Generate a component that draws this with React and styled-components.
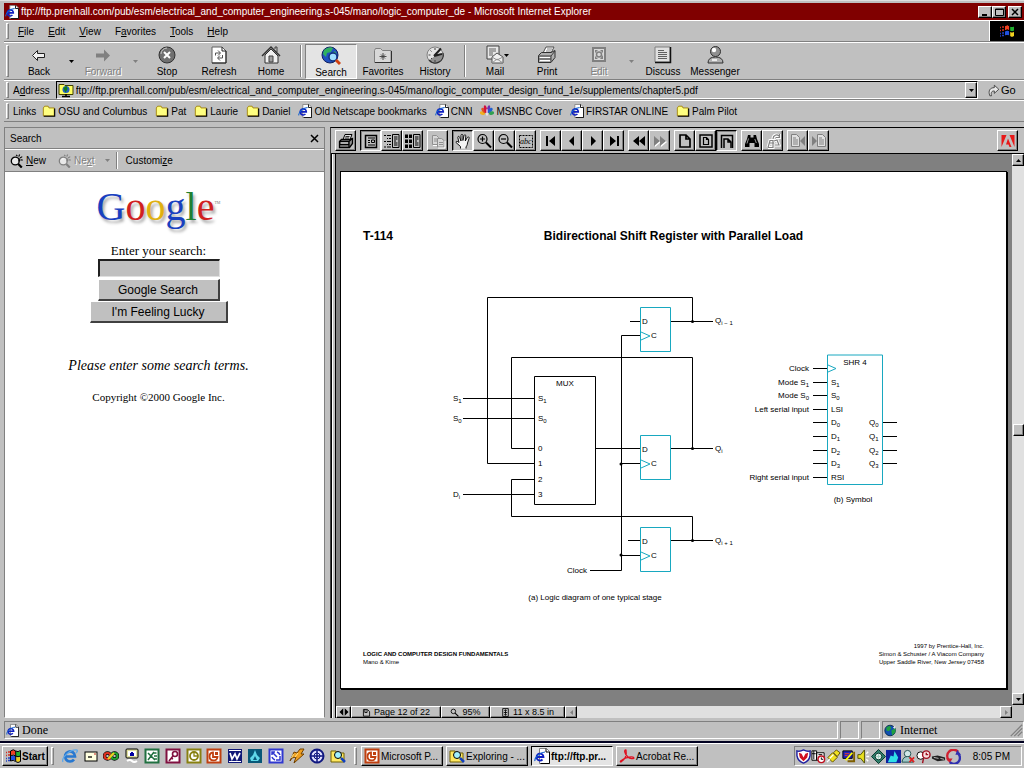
import React from 'react';
import styled, { createGlobalStyle, css } from 'styled-components';

const GlobalStyle = createGlobalStyle`
    * { box-sizing: border-box; }
    body {
        margin: 0;
        background: #c0c0c0;
        color: #000;
        font: 10px/13px "Liberation Sans", Arial, sans-serif;
    }
    button, input {
        font: inherit;
        color: inherit;
        margin: 0;
        padding: 0;
        border: 0;
        border-radius: 0;
        background: none;
    }
    a { color: inherit; text-decoration: none; }
    u { text-decoration: underline; }
    svg { display: block; flex: none; }
`;

const raised = css`
    border: 1px solid;
    border-color: #fff #000 #000 #fff;
    box-shadow: inset -1px -1px 0 #808080;
`;

const sunken = css`
    border: 1px solid;
    border-color: #808080 #fff #fff #808080;
`;

const Desktop = styled.div`
    min-height: 100vh;
    display: flex;
    flex-direction: column;
`;

const Browser = styled.div`
    flex: 1;
    display: flex;
    flex-direction: column;
    border-top: 1px solid #dfdfdf;
    border-bottom: 2px solid #000020;
    padding: 2px 0 1px 4px;
`;

const TitleBar = styled.header`
    height: 17px;
    display: flex;
    align-items: center;
    background: #800000;
    color: #fff;
    padding: 0 2px 0 1px;
    gap: 2px;
    white-space: nowrap;

    > h1 {
        flex: 1;
        margin: 0;
        font: inherit;
    }
`;

const WindowButton = styled.button`
    ${raised}
    width: 14px;
    height: 12px;
    background: #c0c0c0;
    margin-left: ${p => (p.$apart ? '0' : '-2px')};
    display: grid;
    place-items: center;
`;

const Band = styled.div`
    display: flex;
    align-items: center;
    height: ${p => p.$h}px;
    border-top: 1px solid #fff;
    border-bottom: 1px solid #808080;
    padding-left: 2px;
    white-space: nowrap;
`;

const Grip = styled.i`
    width: 3px;
    height: ${p => p.$h || 16}px;
    border: 1px solid;
    border-color: #fff #808080 #808080 #fff;
    margin-right: ${p => p.$gap || 2}px;
    flex: none;
`;

const Rule = styled.i`
    width: 2px;
    height: ${p => p.$h || 32}px;
    border-left: 1px solid #808080;
    border-right: 1px solid #fff;
    margin: 0 3px;
    flex: none;
`;

const MenuButton = styled.button`
    padding: 0 7px;
`;

const Throbber = styled.div`
    width: 35px;
    height: 20px;
    margin-left: auto;
    background: #000;
    border-left: 1px solid #fff;
    display: grid;
    place-items: center;
`;

const ToolButton = styled.button`
    position: relative;
    width: 52px;
    height: 35px;
    display: flex;
    flex-direction: column;
    align-items: center;
    padding-top: 1px;
    color: ${p => (p.$off ? '#808080' : '#000')};
    text-shadow: ${p => (p.$off ? '1px 1px 0 #fff' : 'none')};
    ${p => p.$pressed && css`
        ${sunken}
        background: #e4e4e4;
    `}
`;

const DropButton = styled.button`
    width: 12px;
    height: 35px;
    display: grid;
    place-items: center;
    color: ${p => (p.$off ? '#808080' : '#000')};
`;

const InnerDrop = styled.span`
    position: absolute;
    right: 12px;
    top: 9px;
`;

const AddressBox = styled.div`
    flex: 1;
    display: flex;
    align-items: center;
    height: 18px;
    border: 1px solid;
    border-color: #000 #fff #fff #000;
    padding-left: 1px;

    > input {
        flex: 1;
        min-width: 0;
        margin-left: 2px;
    }
`;

const ComboButton = styled.button`
    ${raised}
    width: 12px;
    height: 16px;
    background: #c0c0c0;
    display: grid;
    place-items: center;
`;

const GoButton = styled.button`
    display: flex;
    align-items: center;
    gap: 1px;
    width: 46px;
    padding-left: 9px;
    font-size: 11px;
`;

const BandLabel = styled.label`
    padding: 0 6px 0 2px;
`;

const LinkItem = styled.a`
    display: flex;
    align-items: center;
    gap: 2px;
    margin-right: 8px;
`;

const Main = styled.main`
    flex: 1;
    display: flex;
    margin-top: 5px;
    gap: 5px;
`;

const SearchPane = styled.aside`
    width: 321px;
    display: flex;
    flex-direction: column;
    border: 1px solid;
    border-color: #808080 #808080 #fff #808080;
`;

const PaneHead = styled.div`
    height: 21px;
    display: flex;
    align-items: center;
    justify-content: space-between;
    padding: 0 5px;
    border-bottom: 1px solid #808080;

    > h2 { margin: 0; font: inherit; }
`;

const PaneTools = styled.div`
    height: 23px;
    display: flex;
    align-items: center;
    border-top: 1px solid #fff;
    border-bottom: 1px solid #808080;
    padding-left: 5px;
`;

const PaneButton = styled.button`
    display: flex;
    align-items: center;
    gap: 2px;
    padding: 0 ${p => p.$after || 0}px 0 ${p => p.$before || 0}px;
    color: ${p => (p.$off ? '#808080' : '#000')};
    text-shadow: ${p => (p.$off ? '1px 1px 0 #fff' : 'none')};
`;

const PaneBody = styled.div`
    flex: 1;
    display: flex;
    flex-direction: column;
    align-items: center;
    background: #fff;
    padding: 11px 12px 0 0;
    font: 13px/16px "Liberation Serif", "Times New Roman", serif;

    > form {
        display: flex;
        flex-direction: column;
        align-items: center;
    }
    > em { font-size: 14px; margin-top: 35px; }
    > p { font-size: 11px; margin: 15px 0 0; }
`;

const Logo = styled.div`
    font-size: 40px;
    line-height: 48px;
    margin-bottom: 12px;
    text-shadow: 2px 3px 3px #aaa;
    display: flex;

    > small { font-size: 4px; line-height: 40px; color: #777; text-shadow: none; }
`;

const Letter = styled.span`
    color: ${p => p.$c};
`;

const SearchInput = styled.input`
    width: 122px;
    height: 18px;
    margin: 0 0 2px;
    background: #c0c0c0;
    border: 1px solid;
    border-width: 2px 1px 1px 2px;
    border-color: #202020 #dfdfdf #dfdfdf #202020;
`;

const SearchButton = styled.button`
    width: ${p => p.$w}px;
    height: 22px;
    background: #c0c0c0;
    border: 1px solid;
    border-width: 1px 2px 2px 1px;
    border-color: #fff #404040 #404040 #fff;
    font: 12px/16px "Liberation Sans", Arial, sans-serif;
`;

const Viewer = styled.section`
    flex: 1;
    min-width: 0;
    display: flex;
    flex-direction: column;
    border-left: 1px solid #404040;
    border-top: 1px solid #000;
`;

const ViewerTools = styled.div`
    height: 26px;
    display: flex;
    align-items: center;
    gap: 4px;
    padding: 0 6px 0 4px;
    border-bottom: 1px solid #000;

    > :last-child { margin-left: auto; }
`;

const ToolGroup = styled.div`
    display: flex;
`;

const ViewerButton = styled.button`
    width: 21px;
    height: 21px;
    display: grid;
    place-items: center;
    color: ${p => (p.$off ? '#808080' : '#000')};
    ${raised}
    ${p => p.$pressed && css`
        border-color: #000 #fff #fff #000;
        box-shadow: inset 1px 1px 0 #808080;
    `}
`;

const ViewerBody = styled.div`
    flex: 1;
    display: flex;
`;

const Splitter = styled.div`
    width: 5px;
    background: #c0c0c0;
    border: 1px solid #000;
    border-width: 0 1px;
    box-shadow: inset 1px 0 0 #fff;
`;

const DocumentColumn = styled.div`
    flex: 1;
    min-width: 0;
    display: flex;
    flex-direction: column;
`;

const Canvas = styled.div`
    flex: 1;
    display: flex;
    background: #808080;
    padding: 17px 5px 17px 4px;
`;

const Paper = styled.article`
    flex: 1;
    display: flex;
    flex-direction: column;
    background: #fff;
    border: 1px solid #000;
    box-shadow: 1px 1px 0 #000;
    padding: 57px 22px 22px;
`;

const PaperHead = styled.div`
    display: grid;
    grid-template-columns: 1fr auto 1fr;
    font-size: 12px;
    line-height: 14px;
    font-weight: bold;

    > h2 { margin: 0; font: inherit; }
`;

const Figures = styled.div`
    display: flex;
    align-items: flex-start;
    gap: 7px;
    padding: 46px 0 0 87px;
`;

const Figure = styled.figure`
    margin: ${p => p.$drop || 0}px 0 0;
    font-size: 8px;
    line-height: 10px;
    text-align: center;

    > figcaption { padding-top: ${p => p.$gap}px; }
`;

const PaperFoot = styled.footer`
    margin-top: auto;
    display: flex;
    justify-content: space-between;
    align-items: flex-end;
    font-size: 6px;
    line-height: 8px;

    > p { margin: 0; }
    > p:last-child { text-align: right; }
`;

const VScroll = styled.div`
    width: 12px;
    display: flex;
    flex-direction: column;
    align-items: center;
    background: #e0e0e0;
    margin-bottom: 13px;
`;

const ScrollButton = styled.button`
    ${raised}
    width: 12px;
    height: 12px;
    background: #c0c0c0;
    display: grid;
    place-items: center;
    flex: none;
    color: ${p => (p.$off ? '#808080' : '#000')};
`;

const Thumb = styled.div`
    ${raised}
    width: 11px;
    height: 12px;
    background: #c0c0c0;
`;

const Spacer = styled.i`
    flex: 1;
`;

const DocStatus = styled.div`
    height: 12px;
    display: flex;
    align-items: stretch;
    background: #e0e0e0;
    font-size: 9px;
`;

const DocCell = styled.button`
    ${raised}
    width: ${p => p.$w}px;
    display: flex;
    align-items: center;
    justify-content: center;
    gap: 3px;
    background: #c0c0c0;
    line-height: 10px;
`;

const StatusBar = styled.div`
    display: flex;
    gap: 2px;
    height: 20px;
    margin-top: 2px;
    padding: 1px 0;
    font: 12px/16px "Liberation Serif", "Times New Roman", serif;
`;

const StatusCell = styled.div`
    ${sunken}
    display: flex;
    align-items: center;
    gap: 3px;
    padding-left: 1px;
    ${p => (p.$w ? `width: ${p.$w}px;` : 'flex: 1;')}

    > svg:last-child:not(:first-child) { margin-left: auto; }
`;

const TaskBar = styled.nav`
    height: 25px;
    display: flex;
    align-items: center;
    border-top: 1px solid #fff;
    padding: 0 2px;
`;

const StartButton = styled.button`
    ${raised}
    width: 46px;
    height: 20px;
    display: flex;
    align-items: center;
    gap: 1px;
    padding-left: 2px;
    font-weight: bold;
    margin-right: 3px;
`;

const QuickLaunch = styled.div`
    width: 284px;
    display: flex;
    justify-content: space-between;
    margin: 0 8px 0 6px;
`;

const TaskButton = styled.button`
    ${raised}
    width: 82px;
    height: 20px;
    margin-right: 3px;
    padding-left: 2px;
    display: flex;
    align-items: center;
    gap: 1px;
    white-space: nowrap;
    ${p => p.$pressed && css`
        border-color: #000 #fff #fff #000;
        box-shadow: none;
        background: #e4e4e4;
        font-weight: bold;
    `}
`;

const Tray = styled.div`
    ${sunken}
    width: 228px;
    height: 20px;
    margin-left: auto;
    display: flex;
    align-items: center;
    padding-left: 1px;

    > time { margin: 0 11px 0 auto; }
`;

const folder = (
    <>
        <path d="M1.500 4.500l1.500-2h4l1 2h6v9h-12.500z" fill="#ffff80" stroke="#a08000" />
        <path d="M2 14h12.500V5" fill="none" stroke="#000" strokeWidth="1.300" />
    </>
);

const pageE = (
    <>
        <path d="M5.500.500h7l3 3v12h-10z" fill="#fff" stroke="#808080" />
        <path d="M12 .500v3.500h3.500v11.500h-9" fill="none" stroke="#000" />
        <path d="M3 9h6.500A3.500 3.500 0 1 0 8.500 11.500" fill="none" stroke="#1020c0" strokeWidth="1.800" />
        <path d="M1 13C0 10 6 4 11 4" fill="none" stroke="#1060d0" strokeWidth="1.200" />
    </>
);

const lens = (
    <>
        <circle cx="6" cy="8" r="4.500" fill="#e8e8e8" stroke="currentColor" strokeWidth="1.500" />
        <path d="M4 6.500q1-1 2.500-1" fill="none" stroke="#fff" />
        <path d="M9.500 11.500l4 4" stroke="currentColor" strokeWidth="2.500" />
        <path d="M7 1l1.500 1.500M11 .500L10 3M14 3l-2.500 1.500M14.500 7L12 6.500M10 4.500l1 3-1.500.500" fill="none" stroke="currentColor" strokeWidth="1.300" />
    </>
);

const findFolder = (
    <>
        <path d="M1 3h5l1 2h7v9H1z" fill="#ffe860" stroke="#706000" />
        <circle cx="8" cy="7" r="3.500" fill="#a0f0ff" stroke="#000" />
        <path d="M11 10l4 4" stroke="#1040c0" strokeWidth="2.500" />
    </>
);

const printerShape = (
    <>
        <path d="M5 6.500l2-5h7l-2 5" fill="#e0e0e0" stroke="currentColor" />
        <path d="M7.500 3.500h4M7 5h4" stroke="currentColor" strokeWidth=".8" />
        <path d="M1.500 8.500l2-2h9l2-1v5l-3 4h-10z" fill="#909090" stroke="currentColor" strokeWidth="1.300" />
        <path d="M2 8.500h9l3-3M2 11.500h9M11 8.500v5.500" fill="none" stroke="currentColor" strokeWidth="1.300" />
        <path d="M3 10h7" stroke="#f0f0f0" />
    </>
);

const binoculars = (
    <>
        <path d="M4 2h2.500v2.500h3V2H12l1 4 2 5v3h-4.500v-4h-5v4H1v-3l2-5z" fill="currentColor" />
        <path d="M4.500 5.500l-1.500 5M10.800 6l1.500 4" stroke="#c0c0c0" strokeWidth=".8" />
    </>
);

const appTile = (color, mark) => (
    <>
        <rect x="1.500" y="1.500" width="13" height="13" fill="#fff" stroke={color} strokeWidth="2" />
        {mark}
    </>
);

const flag = (
    <>
        <path d="M6 3q2.500-2 4.500 0v4.500q-2-2-4.500 0z" fill="#f04020" />
        <path d="M11 3.500q2.500 1 4.500-.500V8q-2 1-4.500 0z" fill="#20b030" />
        <path d="M6 8.500q2.500-2 4.500 0V13q-2-2-4.500 0z" fill="#2050e0" />
        <path d="M11 9q2.500 1 4.500-.500V13q-2 1.500-4.500.500z" fill="#f0d020" />
        <path d="M1 4.500h1M3 4h2M1 7.500h1M3 7h2" stroke="#d03020" strokeWidth="1.500" />
        <path d="M1 10.500h1M3 10h2M1 13h1M3 12.500h2" stroke="#2040c0" strokeWidth="1.500" />
        <path d="M5.500 13V3q3-2.500 5.200 0 2.300 1.500 4.800-.500v11q-2.500 2-5 0-2-2-5-.500M5.500 8q3-2 5 0 2.500 1.500 5 0M10.700 3v10" fill="none" stroke="#000" />
    </>
);

const pageLines = 'M8.500 1.500h6.500v13h-6.500zM10 4h3.500M10 6h3.500M10 8h2M10 10h3.500M10 12h3.500';

const shapes = {
    folder,
    page: pageE,
    flag,
    findFolder,
    lens,
    printer: printerShape,
    binoculars,
    // address bar and links
    network: (
        <>
            <path d="M1 2.500h5l1 1h8v9H1z" fill="#ffff60" stroke="#404000" />
            <circle cx="8" cy="7.500" r="3.500" fill="#2060c0" />
            <path d="M5.500 6l3-2 1 3-2 3.500z" fill="#108010" />
            <path d="M8 12v2.500M4 14.500h8" stroke="#000" strokeWidth="1.500" />
        </>
    ),
    peacock: (
        <>
            <ellipse cx="3" cy="10.500" rx="3" ry="2" fill="#f0b020" transform="rotate(20 3 10)" />
            <ellipse cx="4" cy="7.500" rx="2" ry="3.500" fill="#e05020" transform="rotate(-40 4 7)" />
            <ellipse cx="6.300" cy="6" rx="1.700" ry="4.500" fill="#d01040" transform="rotate(-12 6 6)" />
            <ellipse cx="9.700" cy="6" rx="1.700" ry="4.500" fill="#7030b0" transform="rotate(12 10 6)" />
            <ellipse cx="12" cy="7.500" rx="2" ry="3.500" fill="#2060d0" transform="rotate(40 12 7)" />
            <ellipse cx="13" cy="10.500" rx="3" ry="2" fill="#30a050" transform="rotate(-20 13 10)" />
            <path d="M8 13V6" stroke="#fff" strokeWidth="1.300" />
        </>
    ),
    go: <path d="M3.500 14.500C1 8 4 4.500 9 4.500V1.500l5.500 5-5.500 5V8.500C6 8.500 4.500 10 5.500 14.500z" fill="#e8e8e8" stroke="#303030" />,
    // document toolbar
    viewPage: (
        <>
            <rect x="2.500" y="2.500" width="11" height="12" fill="#c0c0c0" stroke="#000" strokeWidth="1.500" />
            <path d="M5 5h7M5 7.500h2M5 9.500h2M5 12h7M8.500 7h3v2.500h-3z" fill="none" stroke="#000" />
        </>
    ),
    viewOutline: (
        <>
            <path d="M0 2.500h2M3 2.500h4M3 5.500h1M5 5.500h2M0 8.500h2M3 8.500h4M3 11.500h1M5 11.500h2M0 14h2M3 14h4" stroke="#000" />
            <path d={pageLines} fill="none" stroke="#000" />
        </>
    ),
    viewThumbs: (
        <>
            <path d="M0 1.500h3v3.500H0zM4 1.500h3v3.500H4zM0 6.500h3V10H0zM4 6.500h3V10H4zM0 11.500h3V15H0zM4 11.500h3V15H4z" />
            <path d={pageLines} fill="none" stroke="#000" />
        </>
    ),
    copy: (
        <g fill="#d8d8d8" stroke="#909090">
            <path d="M2.500 2.500h4l2 2v7h-6zM4 6h3M4 8h3" />
            <path d="M7.500 5.500h4l2.500 2v6.500h-6.500zM9 9.500h4M9 11.500h4" />
            <path d="M3 12.500h4M8 15h7V8" fill="none" stroke="#fff" />
        </g>
    ),
    hand: <path d="M5.500 15.500v-2L1 9.500c0-1.800 1.500-1.500 3 0L2.800 4.500c0-1.500 1.400-1.500 1.900 0L6 8V2.500c0-1.600 1.900-1.600 1.900 0V7.500l1.100-5c.5-1.300 2-.8 1.800.5L10.300 8l2-3.500c.9-1.300 2.200-.5 1.700 1L12.500 10c0 2-1 3-1.500 4v1.500" fill="#f4f4f4" stroke="#000" strokeWidth=".9" />,
    zoomIn: (
        <>
            <circle cx="6.500" cy="6" r="4.500" fill="none" stroke="#000" strokeWidth="1.200" />
            <path d="M4 6h5M6.500 3.500v5" stroke="#000" strokeWidth="1.200" />
            <path d="M10 9.500l5 5" stroke="#000" strokeWidth="2" />
        </>
    ),
    zoomOut: (
        <>
            <circle cx="6.500" cy="6" r="4.500" fill="none" stroke="#000" strokeWidth="1.200" />
            <path d="M4 6h5" stroke="#000" strokeWidth="1.200" />
            <path d="M10 9.500l5 5" stroke="#000" strokeWidth="2" />
        </>
    ),
    selectText: (
        <>
            <rect x="1.500" y="2.500" width="13" height="12" fill="none" stroke="#000" strokeDasharray="2 1" />
            <text x="2" y="11" fontSize="8" fontStyle="italic" fontFamily="Liberation Serif, serif">abc</text>
        </>
    ),
    first: <path d="M3 3h2v10H3zM12 3v10L6 8z" />,
    prev: <path d="M10 3v10L5 8z" />,
    next: <path d="M6 3v10l5-5z" />,
    last: <path d="M11 3h2v10h-2zM4 3v10l6-5z" />,
    back2: <path d="M8 3v10L2 8zM14 3v10L8 8z" />,
    fwd2: (
        <>
            <path d="M3 4v10l6-5zM9 4v10l6-5z" fill="#fff" />
            <path d="M2 3v10l6-5zM8 3v10l6-5z" fill="#808080" />
        </>
    ),
    pageActual: <path d="M3 2h6l4 4v8H3zM9 2v4h4" fill="none" stroke="#000" strokeWidth="1.700" />,
    pageFit: (
        <>
            <path d="M2 2h12v12H2z" fill="none" stroke="#000" strokeWidth="1.500" />
            <path d="M5.500 4.500h3l2 2v5h-5zM8.500 4.500v2h2" fill="none" stroke="#000" strokeWidth="1.200" />
        </>
    ),
    pageWidth: (
        <>
            <path d="M2.500 15V2.500h11V15" fill="none" stroke="#000" strokeWidth="1.500" />
            <path d="M5 15V6h4l3 3v6M9 6v3h3" fill="none" stroke="#000" strokeWidth="1.500" />
        </>
    ),
    findNext: (
        <>
            <path d="M3 14.500l2-7h3v7H3M8 6c0-4 4-5 6-3M14.500 1v3.500H11M9 8l3-1 2 5h-4M4 10h5" fill="none" stroke="#fff" strokeWidth="3" />
            <path d="M3 14.500l2-7h3v7H3M8 6c0-4 4-5 6-3M14.500 1v3.500H11M9 8l3-1 2 5h-4M4 10h5" fill="none" stroke="#808080" strokeWidth="1.200" />
        </>
    ),
    pagePrev: (
        <>
            <path d="M1.500 1.500h5l3 3v9h-8zM3 5h3M3 7h5M3 9h5M3 11h5" fill="#e0e0e0" stroke="#808080" />
            <path d="M15 3v10l-5-5z" fill="#808080" />
        </>
    ),
    pageNext: (
        <>
            <path d="M6.500 1.500h5l3 3v9h-8zM8 5h3M8 7h5M8 9h5M8 11h5" fill="#e0e0e0" stroke="#808080" />
            <path d="M1 3v10l5-5z" fill="#808080" />
        </>
    ),
    adobe: (
        <>
            <path d="M1.500 2h5L1.500 14zM9.500 2h5v12z" fill="#e81818" />
            <path d="M8 5.500L11.500 14H9.500l-1-2.500H6z" fill="#e81818" />
        </>
    ),
    // status bars
    sheet: <path d="M2.500 2.500h7l4 4v8h-11zM5 2v6h4V3" fill="none" stroke="#000" strokeWidth="1.500" />,
    loupe: (
        <>
            <circle cx="6" cy="6" r="4" fill="none" stroke="#000" strokeWidth="1.500" />
            <path d="M9 9l6 6" stroke="#000" strokeWidth="2" />
        </>
    ),
    size: <path d="M3 1h10v14H3zM6 5l2-2 2 2M6 11l2 2 2-2M8 3v10M5 8h6" fill="none" stroke="#000" strokeWidth="1.500" />,
    split: <path d="M7 3v10L2 8zM9 3v10l5-5z" />,
    earth: (
        <>
            <circle cx="7.500" cy="8" r="6.500" fill="#1050b0" stroke="#002040" />
            <path d="M3 4l4-2 2 3-3 4-3-1zM9 8l5-3v5l-4 4z" fill="#20a040" />
            <path d="M11 4l3-2-1 4z" fill="#f0f0f0" />
        </>
    ),
    resize: <path d="M2 15L15 2M6 15l9-9M10 15l5-5" stroke="#808080" strokeWidth="1.500" />,
    // quick launch
    ie: (
        <>
            <path d="M3.500 8.500h9.500A5 5 0 1 0 12 11.500" fill="none" stroke="#2878d0" strokeWidth="2.700" />
            <path d="M1 14C-1 10 8 1 15 2c1 1 0 2-1 3" fill="none" stroke="#60a8e8" strokeWidth="1.300" />
        </>
    ),
    mail: (
        <>
            <rect x="2" y="4" width="12" height="9" fill="#ffffe0" stroke="#000" />
            <path d="M5 9h4" stroke="#000" strokeWidth="1.300" />
            <path d="M11 6h2" stroke="#c02020" />
        </>
    ),
    hands: (
        <>
            <circle cx="4.500" cy="8" r="3" fill="none" stroke="#000" strokeWidth="3.500" />
            <circle cx="11.500" cy="8" r="3" fill="none" stroke="#000" strokeWidth="3.500" />
            <circle cx="4.500" cy="8" r="3" fill="none" stroke="#e03020" strokeWidth="2.200" />
            <circle cx="11.500" cy="8" r="3" fill="none" stroke="#20a030" strokeWidth="2.200" />
            <path d="M5 11l6-6" stroke="#f0d020" strokeWidth="2.200" />
        </>
    ),
    terminal: (
        <>
            <rect x="2" y="1" width="12" height="9" rx="1" fill="#e0e0a0" stroke="#000" />
            <rect x="4" y="3" width="8" height="5" fill="#fff" />
            <path d="M6 5h4v3H6z" fill="#0000a0" />
            <path d="M7 5q1-2 2 0" fill="none" stroke="#0000a0" />
            <path d="M3 13q3-2 5 0t5 0" fill="none" stroke="#fff" strokeWidth="2" />
        </>
    ),
    excel: appTile('#207040', <path d="M4 5l7 7M10 4l-6 8M9.500 5h3M10 8h3M10 11h3" stroke="#207040" strokeWidth="1.500" />),
    access: appTile('#801040', (
        <>
            <circle cx="10" cy="6" r="2.500" fill="none" stroke="#801040" strokeWidth="1.600" />
            <path d="M8 8l-4 5M6 10l2 1" stroke="#801040" strokeWidth="1.600" />
        </>
    )),
    outlook: appTile('#888010', (
        <>
            <circle cx="8" cy="8" r="4" fill="none" stroke="#888010" strokeWidth="1.800" />
            <path d="M8 5v3h3" fill="none" stroke="#888010" strokeWidth="1.300" />
        </>
    )),
    powerpoint: appTile('#c04010', (
        <>
            <path d="M7 4.500a4 4 0 1 0 4.500 4.500H7z" fill="none" stroke="#c04010" strokeWidth="1.800" />
            <path d="M9 4h3v3H9z" fill="#c04010" />
        </>
    )),
    word: (
        <>
            <path d="M1 1h14v14H1z" fill="#101878" />
            <path d="M2 2h12v1H2zM2 13h12v1H2z" fill="#fff" />
            <path d="M3 5l2 6 3-5 2 5 3-6" fill="none" stroke="#fff" strokeWidth="1.700" />
        </>
    ),
    frontpage: (
        <>
            <path d="M1 1h14v14H1z" fill="#085878" />
            <path d="M8 2l2 5 3 3-2 3H4l-1-3 3-3z" fill="#60d8e8" />
            <path d="M8 8l2 4H6z" fill="#085878" />
        </>
    ),
    photo: appTile('#3038d0', <path d="M4 7V4h3M4 4l5 5M12 8v4H8M7 12a5 5 0 0 1-3-3M9 4a5 5 0 0 1 3 3" stroke="#3038d0" strokeWidth="1.500" fill="none" />),
    winamp: (
        <>
            <path d="M11 1h4l-3 5h3L5 15l2-6-4 1-2 3 4-9 3 1z" fill="#f0a020" stroke="#704000" />
            <path d="M4.500 6l-2 4M9 5l-3 4" stroke="#ffe890" />
        </>
    ),
    compass: (
        <>
            <circle cx="8" cy="8" r="6.500" fill="#e0e0ff" stroke="#101880" strokeWidth="2" />
            <path d="M8 1v14M1 8h14" stroke="#101880" strokeWidth="1.500" />
            <circle cx="8" cy="8" r="3" fill="none" stroke="#101880" />
        </>
    ),
    acrobat: <path d="M2 14c4-2 6-7 5-12-2-1-2 4 2 7 2 2 5 2 6 1-1-2-8-1-12 2-2 1-2 2-1 2z" fill="none" stroke="#e01020" strokeWidth="1.300" />,
    // tray
    shield: (
        <>
            <path d="M1 2q3 1 7-1 4 2 7 1v5q-1 6-7 8-6-2-7-8z" fill="#fff" stroke="#2020a0" strokeWidth="1.500" />
            <path d="M3 4l3 1 2 4 2-4 3-1-1 5-4 4-4-4z" fill="#d01020" />
        </>
    ),
    schedule: (
        <>
            <path d="M1 2h5v10H1zM6 4h8v8H6z" fill="#fff" stroke="#000" />
            <path d="M1 5h4M3 2v9M8 6h4" stroke="#000" />
            <circle cx="11" cy="11" r="3.500" fill="#fff" stroke="#c01020" strokeWidth="1.500" />
            <path d="M11 9v2h2" stroke="#000" fill="none" />
        </>
    ),
    plug: (
        <>
            <path d="M2 9l5-5 5 5-5 5zM8 4l3-3 4 3-3 4z" fill="#f0e020" stroke="#605000" />
            <path d="M4 10l4-4M1 14l3-3" stroke="#fff" strokeWidth="1.500" />
        </>
    ),
    display: (
        <>
            <path d="M2 2h10v8H2z" fill="#2020c0" stroke="#000" />
            <path d="M7 13h7V3" fill="none" stroke="#806000" strokeWidth="2" />
            <path d="M5 12l7-8" stroke="#ff0" strokeWidth="2" />
            <path d="M4 5h5M4 7h3" stroke="#f04020" />
        </>
    ),
    speaker: (
        <>
            <path d="M2 6h3l4-5v14l-4-5H2z" fill="#e8e020" stroke="#505000" />
            <path d="M11 5l2-2M11 8h3M11 11l2 2" stroke="#fff" strokeWidth="1.500" />
        </>
    ),
    diamond: (
        <>
            <path d="M8 .500L15.500 8 8 15.500.500 8z" fill="#30806c" stroke="#003028" />
            <circle cx="8" cy="8" r="3.500" fill="#fff" stroke="#003028" />
            <path d="M8 5.500v5M5.500 8h5" stroke="#a0d0c0" strokeWidth="1.500" />
        </>
    ),
    peak: (
        <>
            <path d="M0 1h16v14H0z" fill="#1020a0" />
            <path d="M2 14l3-7 3 1 1-6 4 7-2 5z" fill="#30e0e8" />
        </>
    ),
    buddy: (
        <>
            <circle cx="7" cy="5" r="3.500" fill="#d0e8e8" stroke="#205050" />
            <path d="M1 14q1-6 6-6t6 6z" fill="#a0c8c8" stroke="#205050" />
            <path d="M9 9l5 5M14 9l-5 5" stroke="#e02020" strokeWidth="1.800" />
        </>
    ),
    finder: (
        <>
            <circle cx="5" cy="7" r="4" fill="#fff" stroke="#000" />
            <circle cx="11" cy="6" r="4" fill="#f8e0e0" stroke="#a01020" strokeWidth="1.500" />
            <path d="M8 10l-1 5M11 4v2h2" fill="none" stroke="#a01020" strokeWidth="1.500" />
        </>
    ),
    modem: (
        <>
            <path d="M1 8l6-1 8 2v3l-8 1-6-3z" fill="#202020" />
            <path d="M3 9l5 1M10 10l4 1" stroke="#c0c0c0" />
        </>
    ),
    sync: (
        <>
            <path d="M13 3A6 6 0 0 0 3 12" fill="none" stroke="#d02030" strokeWidth="2.500" />
            <path d="M0 10h7l-3 5z" fill="#d02030" />
            <path d="M4 14A6 6 0 0 0 13 5" fill="none" stroke="#3030b0" strokeWidth="2.500" />
            <path d="M10 6l2-5 4 5z" fill="#3030b0" />
        </>
    ),
};

// main toolbar drawings sit on a 20 unit grid
const toolShapes = {
    Back: <path d="M3.500 10.500l5-5v3h7v4h-7v3z" fill="#f0f0f0" stroke="#202020" />,
    Forward: <path d="M17 10.500l-6-6v4H3v4h8v4z" fill="#808080" />,
    Stop: (
        <>
            <circle cx="10" cy="10" r="8" fill="#707070" stroke="#303030" />
            <path d="M4 9a6 6 0 0 1 6-6" fill="none" stroke="#c8c8c8" />
            <path d="M7 7l6 6M13 7l-6 6" stroke="#fff" strokeWidth="2" />
        </>
    ),
    Refresh: (
        <>
            <path d="M3 2h10l4 4v12H3z" fill="#fff" stroke="#606060" />
            <path d="M3 18h14V6h-4V2" fill="none" stroke="#202020" />
            <path d="M6.500 10.500V8H11M9 5.500L11.500 8 9 10.500M13.500 10v3H9M11 10.500L8.500 13l2.500 2.500" fill="none" stroke="#505050" />
        </>
    ),
    Home: (
        <>
            <path d="M14 4V2h2v5" fill="#c0c0c0" stroke="#404040" />
            <path d="M4 10l6-6 7 7v7H4z" fill="#f0f0f0" stroke="#303030" />
            <path d="M1 11l9-9 9 9" fill="none" stroke="#303030" strokeWidth="1.500" />
            <path d="M8 17v-6h4v6z" fill="#a0a0a0" stroke="#404040" />
        </>
    ),
    Search: (
        <>
            <circle cx="9" cy="9" r="8" fill="#2050c0" stroke="#102060" />
            <path d="M3 4q5-4 9-2l-2 4-4 1-1 4-3-3zM10 8l4-3 2 4-2 3z" fill="#30b060" />
            <circle cx="12" cy="11" r="4" fill="#a0e0ff" stroke="#103080" strokeWidth="1.500" />
            <path d="M15 14l4 4" stroke="#d04010" strokeWidth="3" />
        </>
    ),
    Favorites: (
        <>
            <path d="M1.500 5.500l1-2h5l2 2h8.500v12H1.500z" fill="#d8d8d8" stroke="#808080" />
            <path d="M2 17.500h16.500V6" fill="none" stroke="#303030" />
            <path d="M10 8v7M6.500 11.500h7M8 9.500l4 4M12 9.500l-4 4" stroke="#404040" strokeWidth=".9" />
        </>
    ),
    History: (
        <>
            <circle cx="10" cy="10" r="8" fill="#e4e4e4" stroke="#808080" />
            <path d="M10 18a8 8 0 0 0 8-8l-8 1-6 4.500a8 8 0 0 0 6 2.500z" fill="#909090" />
            <path d="M18 8a8 8 0 0 1-14 7" fill="none" stroke="#303030" strokeWidth="1.300" />
            <path d="M10 3v2M3.500 10h2M5.500 5.500l1 1M6 14l1-1M10 15v2" stroke="#404040" />
            <path d="M9 11l7-7.500M9 11l8-2" stroke="#202020" strokeWidth="2" />
        </>
    ),
    Mail: (
        <>
            <path d="M2 1h12v13H2z" fill="#e8e8e8" stroke="#404040" />
            <path d="M4 4h7M4 6h7M4 8h4M4 10h4" stroke="#606060" />
            <path d="M7 12l5-4 6 4v6H7z" fill="#f0f0f0" stroke="#505050" />
            <path d="M7 18l5-4 6 4M7 12l5 3 6-3" fill="none" stroke="#909090" />
        </>
    ),
    Print: (
        <>
            <path d="M6 8l3-6h8l-3 6" fill="#fff" stroke="#505050" />
            <path d="M10 4h5M9 6h5" stroke="#808080" />
            <path d="M1.500 10.500l3-3H14l4-2v7l-4 5H1.500z" fill="#b0b0b0" stroke="#303030" />
            <path d="M2 11h12l4-5M2 14h12M14 11v6" fill="none" stroke="#404040" />
            <path d="M3 12.500h10M3 15.500h10" stroke="#fff" />
        </>
    ),
    Edit: (
        <>
            <path d="M3 2h14v15H3z" fill="#808080" />
            <path d="M5 4h10v11H5z" fill="#d8d8d8" />
            <path d="M6 5h3L6 8zM14 5v3l-3-3zM6 14v-3l3 3zM11 14l3-4v4z" fill="#808080" />
            <circle cx="10" cy="9.500" r="2.500" fill="none" stroke="#808080" strokeWidth="1.500" />
        </>
    ),
    Discuss: (
        <>
            <path d="M2 2h15v15H2z" fill="#e0e0e0" stroke="#808080" />
            <path d="M2 17.500h15.500V2" fill="none" stroke="#101010" strokeWidth="1.500" />
            <path d="M5 5.500h6M5 7.500h9M5 9.500h9M5 11.500h9M5 13.500h9" stroke="#606060" />
        </>
    ),
    Messenger: (
        <>
            <path d="M3 18q0-6 7.500-6t7.500 6z" fill="#b0b0b0" stroke="#303030" />
            <circle cx="10.500" cy="6.500" r="5" fill="#909090" stroke="#303030" />
            <circle cx="9" cy="5" r="2.200" fill="#fff" />
            <path d="M7 15h5" stroke="#fff" strokeWidth="1.500" />
        </>
    ),
};

function Icon({ name, size = 16 }) {
    return (
        <svg width={size} height={size} viewBox="0 0 16 16" fill="currentColor" aria-hidden="true">
            {shapes[name]}
        </svg>
    );
}

function Arrow({ dir = 'down' }) {
    const d = { down: 'M0 1h5L2.500 4z', up: 'M0 4h5L2.500 1z', left: 'M4 0v5L1 2.500z', right: 'M1 0v5l3-2.500z' }[dir];
    return (
        <svg width="5" height="5" viewBox="0 0 5 5" fill="currentColor" aria-hidden="true">
            <path d={d} />
        </svg>
    );
}

function Tool({ name, off, pressed, drop }) {
    return (
        <ToolButton $off={off} $pressed={pressed}>
            <svg width="20" height="20" viewBox="0 0 20 20" aria-hidden="true">{toolShapes[name]}</svg>
            {name}
            {drop && <InnerDrop><Arrow /></InnerDrop>}
        </ToolButton>
    );
}

const menus = [['', 'F', 'ile'], ['', 'E', 'dit'], ['', 'V', 'iew'], ['F', 'a', 'vorites'], ['', 'T', 'ools'], ['', 'H', 'elp']];

const links = [
    ['folder', 'OSU and Columbus'],
    ['folder', 'Pat'],
    ['folder', 'Laurie'],
    ['folder', 'Daniel'],
    ['page', 'Old Netscape bookmarks'],
    ['page', 'CNN'],
    ['peacock', 'MSNBC Cover'],
    ['page', 'FIRSTAR ONLINE'],
    ['folder', 'Palm Pilot'],
];

const viewerGroups = [
    [['printer']],
    [['viewPage', 'on'], ['viewOutline'], ['viewThumbs']],
    [['copy', 'off']],
    [['hand', 'on'], ['zoomIn'], ['zoomOut'], ['selectText']],
    [['first'], ['prev'], ['next'], ['last']],
    [['back2'], ['fwd2', 'off']],
    [['pageActual'], ['pageFit'], ['pageWidth', 'on']],
    [['binoculars'], ['findNext', 'off']],
    [['pagePrev', 'off'], ['pageNext', 'off']],
];

const quick = ['ie', 'mail', 'hands', 'terminal', 'excel', 'access', 'outlook', 'powerpoint', 'word', 'frontpage', 'photo', 'winamp', 'compass', 'findFolder'];
const tray = ['shield', 'schedule', 'plug', 'display', 'speaker', 'diamond', 'peak', 'buddy', 'finder', 'modem', 'sync'];

const google = [['G', '#1840c0'], ['o', '#d02020'], ['o', '#e0b010'], ['g', '#1840c0'], ['l', '#208030'], ['e', '#d02020']];

function Sub({ x, y, base, sub, anchor }) {
    return (
        <text x={x} y={y} textAnchor={anchor}>
            {base}<tspan dy="2" fontSize="6">{sub}</tspan>
        </text>
    );
}

function FlipFlop({ y }) {
    return (
        <>
            <path d={`M640.500 ${y}.500h30v44h-30zM641 ${y + 25}l9 4-9 4`} fill="none" stroke="#18a8c0" />
            <text x="642" y={y + 17}>D</text>
            <text x="651" y={y + 31}>C</text>
        </>
    );
}

function StageDiagram() {
    return (
        <svg width="290" height="290" viewBox="450 289 290 290" fontSize="8" role="img" aria-label="Logic diagram">
            <g fill="none" stroke="#000">
                <path d="M534.500 376.500h61v128h-61z" />
                <path d="M463 398.500h71M463 418.500h71M463 494.500h71" />
                <path d="M534 463.500h-46.500V297.500h205v24" />
                <path d="M534 448.500h-22.500V357.500h181v91" />
                <path d="M534 479.500h-22.500V516.500h181v24" />
                <path d="M596 448.500h44M630 321.500h10M628 540.500h12" />
                <path d="M671 321.500h42M671 448.500h42M671 540.500h42" />
                <path d="M590 570.500h31.500V335.500h19M621 463.500h19M621 555.500h19" />
            </g>
            <circle cx="692.500" cy="321.500" r="1.500" />
            <circle cx="692.500" cy="448.500" r="1.500" />
            <circle cx="692.500" cy="540.500" r="1.500" />
            <circle cx="621" cy="464" r="1.500" />
            <circle cx="621" cy="555" r="1.500" />
            <FlipFlop y={307} />
            <FlipFlop y={435} />
            <FlipFlop y={527} />
            <text x="565" y="386" textAnchor="middle">MUX</text>
            <Sub x="453" y="401" base="S" sub="1" />
            <Sub x="453" y="421" base="S" sub="0" />
            <Sub x="453" y="497" base="D" sub="i" />
            <Sub x="538" y="401" base="S" sub="1" />
            <Sub x="538" y="421" base="S" sub="0" />
            <text x="538" y="451">0</text>
            <text x="538" y="466">1</text>
            <text x="538" y="482">2</text>
            <text x="538" y="497">3</text>
            <Sub x="715" y="323" base="Q" sub="i − 1" />
            <Sub x="715" y="451" base="Q" sub="i" />
            <Sub x="715" y="543" base="Q" sub="i + 1" />
            <text x="567" y="573">Clock</text>
        </svg>
    );
}

const inPins = [['Clock', '', ''], ['Mode S', '1', 'S', '1'], ['Mode S', '0', 'S', '0'], ['Left serial input', '', 'LSI'], ['', '', 'D', '0'], ['', '', 'D', '1'], ['', '', 'D', '2'], ['', '', 'D', '3'], ['Right serial input', '', 'RSI']];

function SymbolDiagram() {
    return (
        <svg width="212" height="136" viewBox="747 352 212 136" fontSize="8" role="img" aria-label="Symbol">
            <path d="M827.500 355h55v129.500h-55zM828 365l8 3.500-8 3.500" fill="none" stroke="#18a8c0" />
            <text x="855" y="365" textAnchor="middle">SHR 4</text>
            {inPins.map(([outer, outerSub, inner, innerSub], i) => {
                const y = 368 + Math.round(i * 13.6);
                return (
                    <g key={i}>
                        <path d={`M813 ${y}.500h14`} stroke="#000" />
                        <Sub x="809" y={y + 3} base={outer} sub={outerSub} anchor="end" />
                        <Sub x="831" y={y + 3} base={inner} sub={innerSub} />
                    </g>
                );
            })}
            {[0, 1, 2, 3].map(n => {
                const y = 368 + Math.round((n + 4) * 13.6);
                return (
                    <g key={n}>
                        <path d={`M883 ${y}.500h14`} stroke="#000" />
                        <Sub x="869" y={y + 3} base="Q" sub={n} />
                    </g>
                );
            })}
        </svg>
    );
}

function SearchBar() {
    return (
        <SearchPane>
            <PaneHead>
                <h2>Search</h2>
                <button aria-label="Close search">
                    <svg width="9" height="9" viewBox="0 0 9 9"><path d="M1 1l7 7M8 1L1 8" stroke="#000" strokeWidth="1.500" /></svg>
                </button>
            </PaneHead>
            <PaneTools>
                <PaneButton $after={12}><Icon name="lens" size={14} /><span><u>N</u>ew</span></PaneButton>
                <PaneButton $off $after={10}><Icon name="lens" size={14} /><span>Ne<u>x</u>t</span></PaneButton>
                <PaneButton $off $after={3} aria-label="Next menu"><Arrow /></PaneButton>
                <Rule $h={17} />
                <PaneButton $before={5}><span>Customi<u>z</u>e</span></PaneButton>
            </PaneTools>
            <PaneBody>
                <Logo>
                    {google.map(([ch, c], i) => <Letter key={i} $c={c}>{ch}</Letter>)}
                    <small>TM</small>
                </Logo>
                <form onSubmit={e => e.preventDefault()}>
                    <label htmlFor="q">Enter your search:</label>
                    <SearchInput id="q" type="text" />
                    <SearchButton $w={122}>Google Search</SearchButton>
                    <SearchButton $w={138}>I'm Feeling Lucky</SearchButton>
                </form>
                <em>Please enter some search terms.</em>
                <p>Copyright ©2000 Google Inc.</p>
            </PaneBody>
        </SearchPane>
    );
}

function PdfViewer() {
    return (
        <Viewer>
            <ViewerTools>
                {viewerGroups.map((group, i) => (
                    <ToolGroup key={i}>
                        {group.map(([name, state]) => (
                            <ViewerButton key={name} aria-label={name} $off={state === 'off'} $pressed={state === 'on'}>
                                <Icon name={name} />
                            </ViewerButton>
                        ))}
                    </ToolGroup>
                ))}
                <ViewerButton aria-label="Adobe"><Icon name="adobe" /></ViewerButton>
            </ViewerTools>
            <ViewerBody>
                <Splitter />
                <DocumentColumn>
                    <Canvas>
                        <Paper>
                            <PaperHead>
                                <span>T-114</span>
                                <h2>Bidirectional Shift Register with Parallel Load</h2>
                            </PaperHead>
                            <Figures>
                                <Figure $gap={14}>
                                    <StageDiagram />
                                    <figcaption>(a) Logic diagram of one typical stage</figcaption>
                                </Figure>
                                <Figure $drop={63} $gap={7}>
                                    <SymbolDiagram />
                                    <figcaption>(b) Symbol</figcaption>
                                </Figure>
                            </Figures>
                            <PaperFoot>
                                <p><b>LOGIC AND COMPUTER DESIGN FUNDAMENTALS</b><br />Mano &amp; Kime</p>
                                <p>1997 by Prentice-Hall, Inc.<br />Simon &amp; Schuster / A Viacom Company<br />Upper Saddle River, New Jersey 07458</p>
                            </PaperFoot>
                        </Paper>
                    </Canvas>
                    <DocStatus>
                        <DocCell $w={15} aria-label="Toggle pane"><Icon name="split" size={12} /></DocCell>
                        <DocCell $w={90}><Icon name="sheet" size={9} />Page 12 of 22</DocCell>
                        <DocCell $w={49}><Icon name="loupe" size={9} />95%</DocCell>
                        <DocCell $w={75}><Icon name="size" size={9} />11 x 8.5 in</DocCell>
                        <ScrollButton $off aria-label="Scroll left"><Arrow dir="left" /></ScrollButton>
                        <Spacer />
                        <ScrollButton $off aria-label="Scroll right"><Arrow dir="right" /></ScrollButton>
                    </DocStatus>
                </DocumentColumn>
                <VScroll>
                    <ScrollButton aria-label="Scroll up"><Arrow dir="up" /></ScrollButton>
                    <Spacer />
                    <Thumb />
                    <Spacer />
                    <ScrollButton aria-label="Scroll down"><Arrow /></ScrollButton>
                </VScroll>
            </ViewerBody>
        </Viewer>
    );
}

function App() {
    return (
        <Desktop>
            <GlobalStyle />
            <Browser>
                <TitleBar>
                    <Icon name="page" size={14} />
                    <h1>ftp://ftp.prenhall.com/pub/esm/electrical_and_computer_engineering.s-045/mano/logic_computer_de - Microsoft Internet Explorer</h1>
                    <WindowButton aria-label="Minimize">
                        <svg width="8" height="8"><path d="M1 7h5" stroke="#000" strokeWidth="2" /></svg>
                    </WindowButton>
                    <WindowButton aria-label="Maximize">
                        <svg width="9" height="8"><path d="M.5 1h8v6.500h-8zM1 1.500h7" fill="none" stroke="#000" /></svg>
                    </WindowButton>
                    <WindowButton $apart aria-label="Close">
                        <svg width="8" height="8"><path d="M1 1l6 6M7 1L1 7" stroke="#000" strokeWidth="1.500" /></svg>
                    </WindowButton>
                </TitleBar>
                <Band $h={22}>
                    <Grip />
                    {menus.map(([a, key, b]) => <MenuButton key={b}>{a}<u>{key}</u>{b}</MenuButton>)}
                    <Throbber><Icon name="flag" /></Throbber>
                </Band>
                <Band $h={38}>
                    <Grip $h={32} $gap={4} />
                    <Tool name="Back" />
                    <DropButton aria-label="Back list"><Arrow /></DropButton>
                    <Tool name="Forward" off />
                    <DropButton $off aria-label="Forward list"><Arrow /></DropButton>
                    <Tool name="Stop" />
                    <Tool name="Refresh" />
                    <Tool name="Home" />
                    <Rule />
                    <Tool name="Search" pressed />
                    <Tool name="Favorites" />
                    <Tool name="History" />
                    <Rule />
                    <Tool name="Mail" drop />
                    <Tool name="Print" />
                    <Tool name="Edit" off />
                    <DropButton $off aria-label="Edit list"><Arrow /></DropButton>
                    <Tool name="Discuss" />
                    <Tool name="Messenger" />
                </Band>
                <Band $h={20}>
                    <Grip />
                    <BandLabel htmlFor="url">A<u>d</u>dress</BandLabel>
                    <AddressBox>
                        <Icon name="network" />
                        <input id="url" type="text" defaultValue="ftp://ftp.prenhall.com/pub/esm/electrical_and_computer_engineering.s-045/mano/logic_computer_design_fund_1e/supplements/chapter5.pdf" />
                        <ComboButton aria-label="Address list"><Arrow /></ComboButton>
                    </AddressBox>
                    <GoButton><Icon name="go" size={13} />Go</GoButton>
                </Band>
                <Band $h={22}>
                    <Grip />
                    <BandLabel as="span">Links</BandLabel>
                    {links.map(([icon, text]) => (
                        <LinkItem key={text} href="#"><Icon name={icon} size={14} />{text}</LinkItem>
                    ))}
                </Band>
                <Main>
                    <SearchBar />
                    <PdfViewer />
                </Main>
                <StatusBar>
                    <StatusCell><Icon name="page" size={13} />Done</StatusCell>
                    <StatusCell $w={19} />
                    <StatusCell $w={19} />
                    <StatusCell $w={142}><Icon name="earth" size={13} />Internet<Icon name="resize" size={14} /></StatusCell>
                </StatusBar>
            </Browser>
            <TaskBar>
                <StartButton><Icon name="flag" />Start</StartButton>
                <Grip $h={18} />
                <QuickLaunch>
                    {quick.map(name => <button key={name} aria-label={name}><Icon name={name} /></button>)}
                </QuickLaunch>
                <Grip $h={18} $gap={4} />
                <TaskButton><Icon name="powerpoint" />Microsoft P...</TaskButton>
                <TaskButton><Icon name="findFolder" />Exploring - ...</TaskButton>
                <TaskButton $pressed><Icon name="page" />ftp://ftp.pr...</TaskButton>
                <TaskButton><Icon name="acrobat" />Acrobat Re...</TaskButton>
                <Tray>
                    {tray.map(name => <Icon key={name} name={name} size={15} />)}
                    <time>8:05 PM</time>
                </Tray>
            </TaskBar>
        </Desktop>
    );
}

export default App;
